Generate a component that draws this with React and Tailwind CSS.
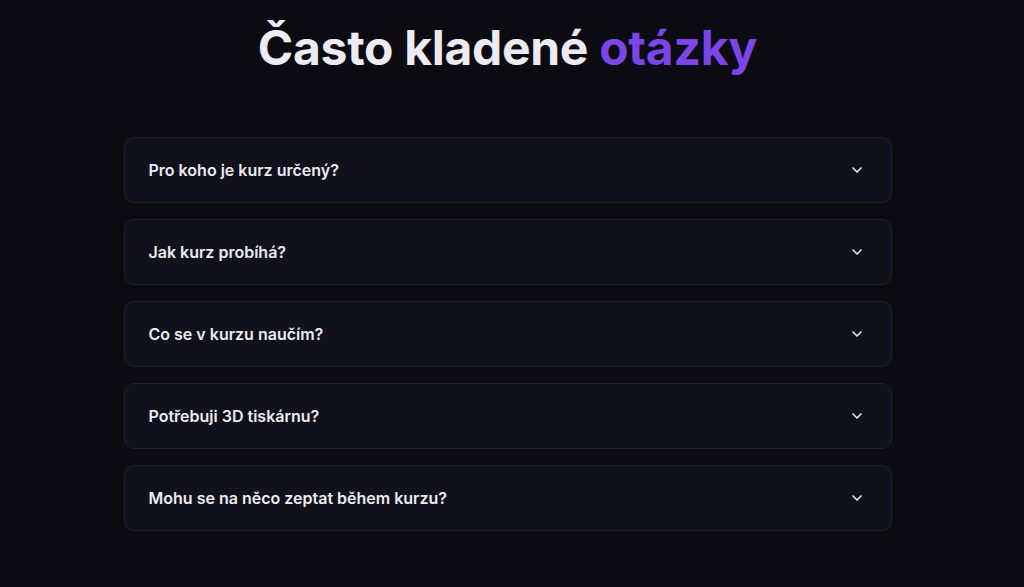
import React from "react";

const questions = [
  "Pro koho je kurz určený?",
  "Jak kurz probíhá?",
  "Co se v kurzu naučím?",
  "Potřebuji 3D tiskárnu?",
  "Mohu se na něco zeptat během kurzu?",
];

function Chevron() {
  return (
    <svg width="16" height="16" viewBox="0 0 24 24" fill="none" stroke="#e5e4ee" strokeWidth="2.5" strokeLinecap="round" strokeLinejoin="round">
      <path d="m6 9 6 6 6-6" />
    </svg>
  );
}

export default function App() {
  return (
    <div className="min-h-[587px] w-full bg-[#0c0b12] pr-[9px]" style={{ fontFamily: "Inter, 'DejaVu Sans', sans-serif" }}>
      <div className="mx-auto max-w-[768px] pt-[18px]">
        <h2 className="text-center text-[48px] font-bold leading-[60px] tracking-[-0.3px] text-[#ecebf2]">
          Často kladené <span className="text-[#7b45e8]">otázky</span>
        </h2>
        <div className="mt-[59px] flex flex-col gap-[16px]">
          {questions.map((q) => (
            <div key={q} className="flex h-[66px] items-center justify-between rounded-[10px] border border-[#1f1d34] bg-[#11111b] pl-6 pr-[26px]">
              <span className="text-[16px] font-semibold text-[#ecebf2]">{q}</span>
              <Chevron />
            </div>
          ))}
        </div>
      </div>
    </div>
  );
}
